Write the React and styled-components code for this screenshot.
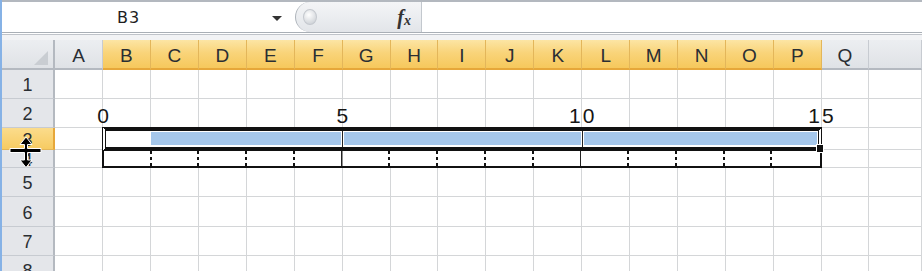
import React from 'react';
import styled, { createGlobalStyle } from 'styled-components';

const COLUMNS = ['A', 'B', 'C', 'D', 'E', 'F', 'G', 'H', 'I', 'J', 'K', 'L', 'M', 'N', 'O', 'P', 'Q'];
const SELECTED_COLS = new Set(['B', 'C', 'D', 'E', 'F', 'G', 'H', 'I', 'J', 'K', 'L', 'M', 'N', 'O', 'P']);

const ROWS = [
  { n: 1, h: 29 },
  { n: 2, h: 29 },
  { n: 3, h: 22, selected: true },
  { n: 4, h: 18 },
  { n: 5, h: 29 },
  { n: 6, h: 30 },
  { n: 7, h: 29 },
  { n: 8, h: 29 },
];

const TICKS = Array.from({ length: 15 }, (_, i) => (i === 14 ? 'none' : i === 4 || i === 9 ? 'solid' : 'dot'));
const LABELS = ['0', '5', '10', '15'];

const App = () => {
  return (
    <Page>
      <GlobalStyle />
      <FormulaBar>
        <NameBox>
          <NameText>B3</NameText>
          <DropArrow />
        </NameBox>
        <FxPanel>
          <Knob />
          <FxLabel>
            f<sub>x</sub>
          </FxLabel>
        </FxPanel>
        <FormulaInput />
      </FormulaBar>
      <BarGap />
      <SheetArea>
        <Grid>
          <Corner />
          {COLUMNS.map((c) => (
            <ColHeader key={c} selected={SELECTED_COLS.has(c)}>
              {c}
            </ColHeader>
          ))}
          <ColHeader />
          {ROWS.map((r) => (
            <React.Fragment key={r.n}>
              <RowHeader selected={r.selected}>{r.n}</RowHeader>
              {COLUMNS.map((c) => (
                <Cell key={c} />
              ))}
              <Cell />
            </React.Fragment>
          ))}
        </Grid>

        <Ruler>
          <Labels>
            {LABELS.map((l) => (
              <Label key={l}>{l}</Label>
            ))}
          </Labels>
          <Bar>
            <Segment>
              <Fill offset={44} />
            </Segment>
            <Segment divided>
              <Fill />
            </Segment>
            <Segment divided>
              <Fill />
            </Segment>
            <FillHandle />
          </Bar>
          <Ticks>
            {TICKS.map((t, i) => (
              <TickCell key={i} kind={t} />
            ))}
          </Ticks>
        </Ruler>

        <ResizeCursor width="34" height="34" viewBox="0 0 34 34">
          <g fill="#000" stroke="#fff" strokeWidth="1" strokeLinejoin="miter">
            <path d="M18 2 L12 9.5 L16.5 9.5 L16.5 13.5 L2 13.5 L2 17.5 L16.5 17.5 L16.5 25 L12 25 L18 32.5 L24 25 L19.5 25 L19.5 17.5 L33 17.5 L33 13.5 L19.5 13.5 L19.5 9.5 L24 9.5 Z" />
          </g>
        </ResizeCursor>
      </SheetArea>
    </Page>
  );
};

const GlobalStyle = createGlobalStyle`
  html, body {
    margin: 0;
    padding: 0;
    background: #ffffff;
    overflow: hidden;
  }
  body {
    font-family: "Liberation Sans", Arial, sans-serif;
  }
`;

const Page = styled.div`
  display: flex;
  flex-direction: column;
  width: 922px;
  height: 271px;
  box-sizing: border-box;
  border-left: 2px solid #86b2e6;
  overflow: hidden;

  & > * {
    flex-shrink: 0;
  }
`;

/* formula bar */

const FormulaBar = styled.div`
  display: flex;
  height: 33px;
  box-sizing: border-box;
  border-top: 2px solid #b3b8bf;
  border-bottom: 1px solid #a9afb6;
  background: #ffffff;
`;

const NameBox = styled.div`
  display: flex;
  align-items: center;
  justify-content: space-between;
  width: 285px;
  padding: 0 5px 0 115px;
  box-sizing: border-box;
`;

const NameText = styled.span`
  font-family: "DejaVu Sans", "Liberation Sans", sans-serif;
  font-size: 16px;
  letter-spacing: 1px;
  color: #1e1e1e;
`;

const DropArrow = styled.span`
  width: 0;
  height: 0;
  border-left: 5px solid transparent;
  border-right: 5px solid transparent;
  border-top: 5px solid #333;
  margin-top: 2px;
`;

const FxPanel = styled.div`
  display: flex;
  align-items: center;
  justify-content: space-between;
  margin-left: 8px;
  width: 127px;
  box-sizing: border-box;
  padding: 0 10px 0 7px;
  background: linear-gradient(#f4f5f7, #e2e5e9);
  border-left: 1px solid #aeb4bb;
  border-right: 1px solid #c3c8ce;
  border-radius: 16px 0 0 16px;
`;

const Knob = styled.span`
  width: 12px;
  height: 14px;
  border-radius: 50%;
  background: radial-gradient(circle at 40% 35%, #ffffff, #cfd3d8 80%);
  border: 1px solid #c4c8ce;
`;

const FxLabel = styled.span`
  font-family: "Liberation Serif", "Times New Roman", serif;
  font-style: italic;
  font-weight: bold;
  font-size: 20px;
  color: #333;

  sub {
    font-size: 14px;
    vertical-align: -1px;
  }
`;

const FormulaInput = styled.div`
  flex: 1;
  background: #ffffff;
`;

const BarGap = styled.div`
  height: 7px;
  background: linear-gradient(#ffffff 0 1px, #bfc3c9 1px 2px, #f2f3f5 2px);
`;

/* sheet grid */

const SheetArea = styled.div`
  position: relative;
`;

const Grid = styled.div`
  display: grid;
  grid-template-columns: 53px 48px repeat(15, 47.93px) 47px 1fr;
  grid-template-rows: 30px ${ROWS.map((r) => `${r.h}px`).join(' ')};
`;

const headerText = `
  font-family: "Liberation Sans", Arial, sans-serif;
  color: #2a2e33;
  display: flex;
  align-items: center;
  justify-content: center;
  box-sizing: border-box;
`;

const Corner = styled.div`
  position: relative;
  background: linear-gradient(#eceef1, #dfe2e6);
  border-right: 2px solid #b4b9c0;
  border-bottom: 2px solid #b4b9c0;

  &::after {
    content: '';
    position: absolute;
    right: 5px;
    bottom: 3px;
    width: 14px;
    height: 14px;
    background: #c9cdd2;
    clip-path: polygon(100% 0, 100% 100%, 0 100%);
  }
`;

const ColHeader = styled.div`
  ${headerText}
  font-size: 19px;
  padding-top: 4px;
  background: ${(p) => (p.selected ? 'linear-gradient(#fce5a4, #f9d47a 45%, #f6c85c)' : 'linear-gradient(#eceef1, #dfe2e6)')};
  border-right: 1px solid ${(p) => (p.selected ? '#e3b65a' : '#c7cbd1')};
  border-bottom: 2px solid ${(p) => (p.selected ? '#e6a73a' : '#b4b9c0')};
`;

const RowHeader = styled.div`
  ${headerText}
  font-size: 18px;
  padding-top: 3px;
  background: ${(p) => (p.selected ? 'linear-gradient(#fbdc8c, #f7cb62)' : '#e4e6ea')};
  border-right: 2px solid ${(p) => (p.selected ? '#e6a73a' : '#b4b9c0')};
  border-bottom: 1px solid ${(p) => (p.selected ? '#e3b65a' : '#c7cbd1')};
  overflow: hidden;
`;

const Cell = styled.div`
  box-sizing: border-box;
  background: #ffffff;
  border-right: 1px solid #d4d6d8;
  border-bottom: 1px solid #d4d6d8;
`;

/* ruler drawn over B2:P4 */

const Ruler = styled.div`
  position: absolute;
  top: 65px;
  left: 100px;
  width: 720px;
  display: flex;
  flex-direction: column;
`;

const Labels = styled.div`
  display: flex;
  justify-content: space-between;
  height: 22px;
`;

const Label = styled.span`
  width: 0;
  display: flex;
  justify-content: center;
  white-space: nowrap;
  font-family: "Liberation Sans", Arial, sans-serif;
  font-size: 21px;
  line-height: 22px;
  letter-spacing: 2px;
  padding-left: 2px;
  color: #151515;
`;

const Bar = styled.div`
  position: relative;
  display: grid;
  grid-template-columns: 236px 240px 236px;
  height: 24px;
  box-sizing: border-box;
  padding: 1px 0 2px;
  background: #ffffff;
  border-top: 4px solid #111;
  border-bottom: 4px solid #111;
  border-left: 4px double #111;
  border-right: 4px double #111;
`;

const Segment = styled.div`
  display: flex;
  box-sizing: border-box;
  margin-top: -1px;
  margin-bottom: -2px;
  padding: 1px 1px 2px;
  border-left: ${(p) => (p.divided ? '1px solid #222' : 'none')};
`;

const Fill = styled.div`
  flex: 1;
  margin-left: ${(p) => (p.offset ? `${p.offset}px` : '0')};
  background: #a5c7eb;
`;

const FillHandle = styled.span`
  position: absolute;
  right: -6px;
  bottom: -6px;
  width: 6px;
  height: 7px;
  background: #111;
  border: 1px solid #fff;
`;

const Ticks = styled.div`
  display: grid;
  grid-template-columns: repeat(15, 1fr);
  height: 17px;
  box-sizing: border-box;
  background: #ffffff;
  border-left: 2px solid #111;
  border-right: 2px solid #111;
  border-bottom: 2px solid #111;
`;

const TickCell = styled.div`
  background: ${(p) =>
    p.kind === 'dot'
      ? 'repeating-linear-gradient(to bottom, #111 0 3px, transparent 3px 6px) right top / 2px 100% no-repeat'
      : p.kind === 'solid'
      ? 'linear-gradient(#222, #222) right top / 1.5px 100% no-repeat'
      : 'none'};
`;

const ResizeCursor = styled.svg`
  position: absolute;
  left: 6px;
  top: 95px;
`;

export default App;
